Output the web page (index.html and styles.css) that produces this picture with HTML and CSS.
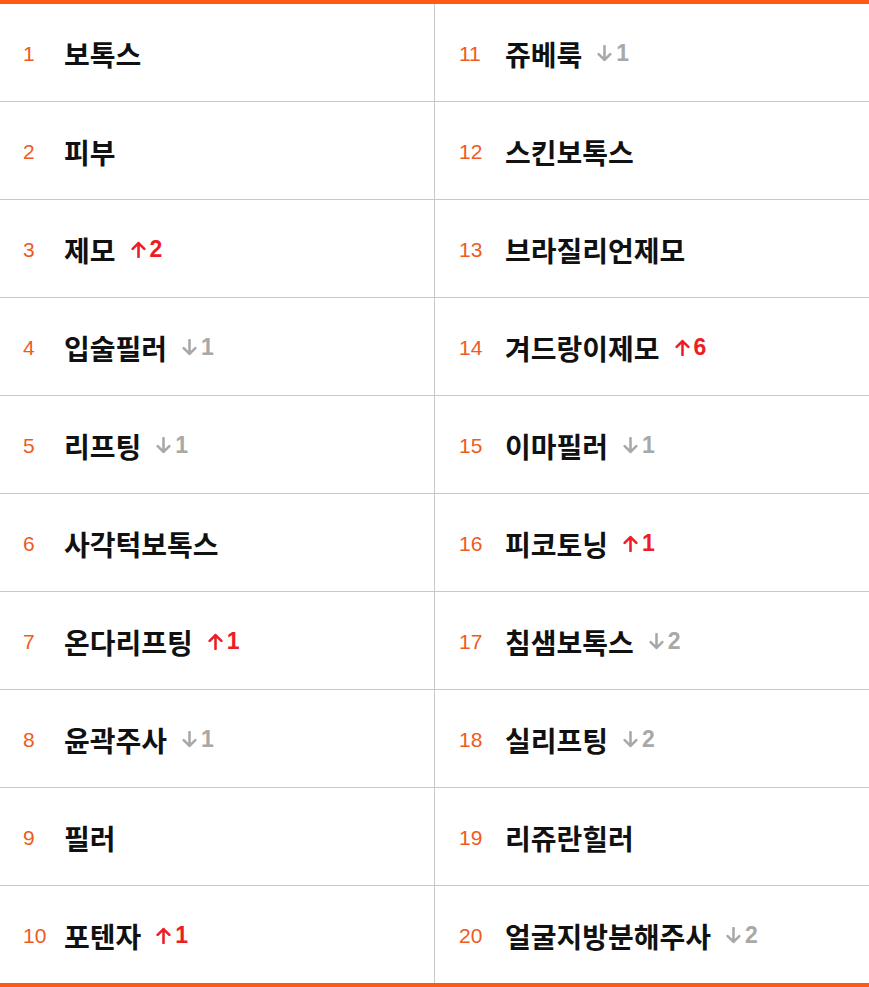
FILE: index.html
```html
<!DOCTYPE html>
<html lang="ko">
<head>
<meta charset="utf-8">
<link rel="stylesheet" href="styles.css">
</head>
<body>
<div class="rank">
  <ol class="col col-left">
    <li class="row"><span class="num">1</span><span class="kw">보톡스</span></li>
    <li class="row"><span class="num">2</span><span class="kw">피부</span></li>
    <li class="row"><span class="num">3</span><span class="kw">제모</span><span class="chg up"><svg viewBox="0 0 14 16"><path d="M7 15V2M1.5 7.5L7 2l5.5 5.5"/></svg>2</span></li>
    <li class="row"><span class="num">4</span><span class="kw">입술필러</span><span class="chg down"><svg viewBox="0 0 14 16"><path d="M7 1v13M1.5 8.5L7 14l5.5-5.5"/></svg>1</span></li>
    <li class="row"><span class="num">5</span><span class="kw">리프팅</span><span class="chg down"><svg viewBox="0 0 14 16"><path d="M7 1v13M1.5 8.5L7 14l5.5-5.5"/></svg>1</span></li>
    <li class="row"><span class="num">6</span><span class="kw">사각턱보톡스</span></li>
    <li class="row"><span class="num">7</span><span class="kw">온다리프팅</span><span class="chg up"><svg viewBox="0 0 14 16"><path d="M7 15V2M1.5 7.5L7 2l5.5 5.5"/></svg>1</span></li>
    <li class="row"><span class="num">8</span><span class="kw">윤곽주사</span><span class="chg down"><svg viewBox="0 0 14 16"><path d="M7 1v13M1.5 8.5L7 14l5.5-5.5"/></svg>1</span></li>
    <li class="row"><span class="num">9</span><span class="kw">필러</span></li>
    <li class="row"><span class="num">10</span><span class="kw">포텐자</span><span class="chg up"><svg viewBox="0 0 14 16"><path d="M7 15V2M1.5 7.5L7 2l5.5 5.5"/></svg>1</span></li>
  </ol>
  <ol class="col col-right">
    <li class="row"><span class="num">11</span><span class="kw">쥬베룩</span><span class="chg down"><svg viewBox="0 0 14 16"><path d="M7 1v13M1.5 8.5L7 14l5.5-5.5"/></svg>1</span></li>
    <li class="row"><span class="num">12</span><span class="kw">스킨보톡스</span></li>
    <li class="row"><span class="num">13</span><span class="kw">브라질리언제모</span></li>
    <li class="row"><span class="num">14</span><span class="kw">겨드랑이제모</span><span class="chg up"><svg viewBox="0 0 14 16"><path d="M7 15V2M1.5 7.5L7 2l5.5 5.5"/></svg>6</span></li>
    <li class="row"><span class="num">15</span><span class="kw">이마필러</span><span class="chg down"><svg viewBox="0 0 14 16"><path d="M7 1v13M1.5 8.5L7 14l5.5-5.5"/></svg>1</span></li>
    <li class="row"><span class="num">16</span><span class="kw">피코토닝</span><span class="chg up"><svg viewBox="0 0 14 16"><path d="M7 15V2M1.5 7.5L7 2l5.5 5.5"/></svg>1</span></li>
    <li class="row"><span class="num">17</span><span class="kw">침샘보톡스</span><span class="chg down"><svg viewBox="0 0 14 16"><path d="M7 1v13M1.5 8.5L7 14l5.5-5.5"/></svg>2</span></li>
    <li class="row"><span class="num">18</span><span class="kw">실리프팅</span><span class="chg down"><svg viewBox="0 0 14 16"><path d="M7 1v13M1.5 8.5L7 14l5.5-5.5"/></svg>2</span></li>
    <li class="row"><span class="num">19</span><span class="kw">리쥬란힐러</span></li>
    <li class="row"><span class="num">20</span><span class="kw">얼굴지방분해주사</span><span class="chg down"><svg viewBox="0 0 14 16"><path d="M7 1v13M1.5 8.5L7 14l5.5-5.5"/></svg>2</span></li>
  </ol>
</div>
</body>
</html>
```
FILE: styles.css
```css
* { box-sizing: border-box; }
html, body { margin: 0; padding: 0; background: #fff; }
body { font-family: "Noto Sans CJK KR", "Noto Sans", sans-serif; }
.rank {
  display: grid;
  grid-template-columns: 435px 434px;
  border-top: 4px solid #ff5a14;
  border-bottom: 4px solid #ff5a14;
  width: 869px;
}
.col { list-style: none; margin: 0; padding: 0; }
.col-left { border-right: 1px solid #c8c8c8; }
.row {
  height: 98px;
  border-bottom: 1px solid #c8c8c8;
  display: flex;
  align-items: center;
  padding-left: 23px;
  padding-top: 2px;
}
.col-right .row { padding-left: 24px; }
.row:last-child { border-bottom: none; height: 97px; }
.num {
  font-family: "Liberation Sans", Arial, sans-serif;
  font-size: 21px;
  color: #f05a22;
  width: 41px;
  flex: none;
}
.col-right .num { width: 46px; }
.kw {
  font-size: 28px;
  font-weight: 700;
  color: #111;
  line-height: 1;
}
.chg {
  display: inline-flex;
  align-items: center;
  margin-left: 15px;
  font-family: "Liberation Sans", Arial, sans-serif;
  font-weight: 700;
  font-size: 23px;
  line-height: 1;
}
.chg svg {
  width: 15px; height: 17px; margin-right: 4px;
  fill: none; stroke: currentColor; stroke-width: 2.4;
  stroke-linecap: round; stroke-linejoin: round;
}
.up { color: #ee1c25; }
.down { color: #a8a8a8; }
```
